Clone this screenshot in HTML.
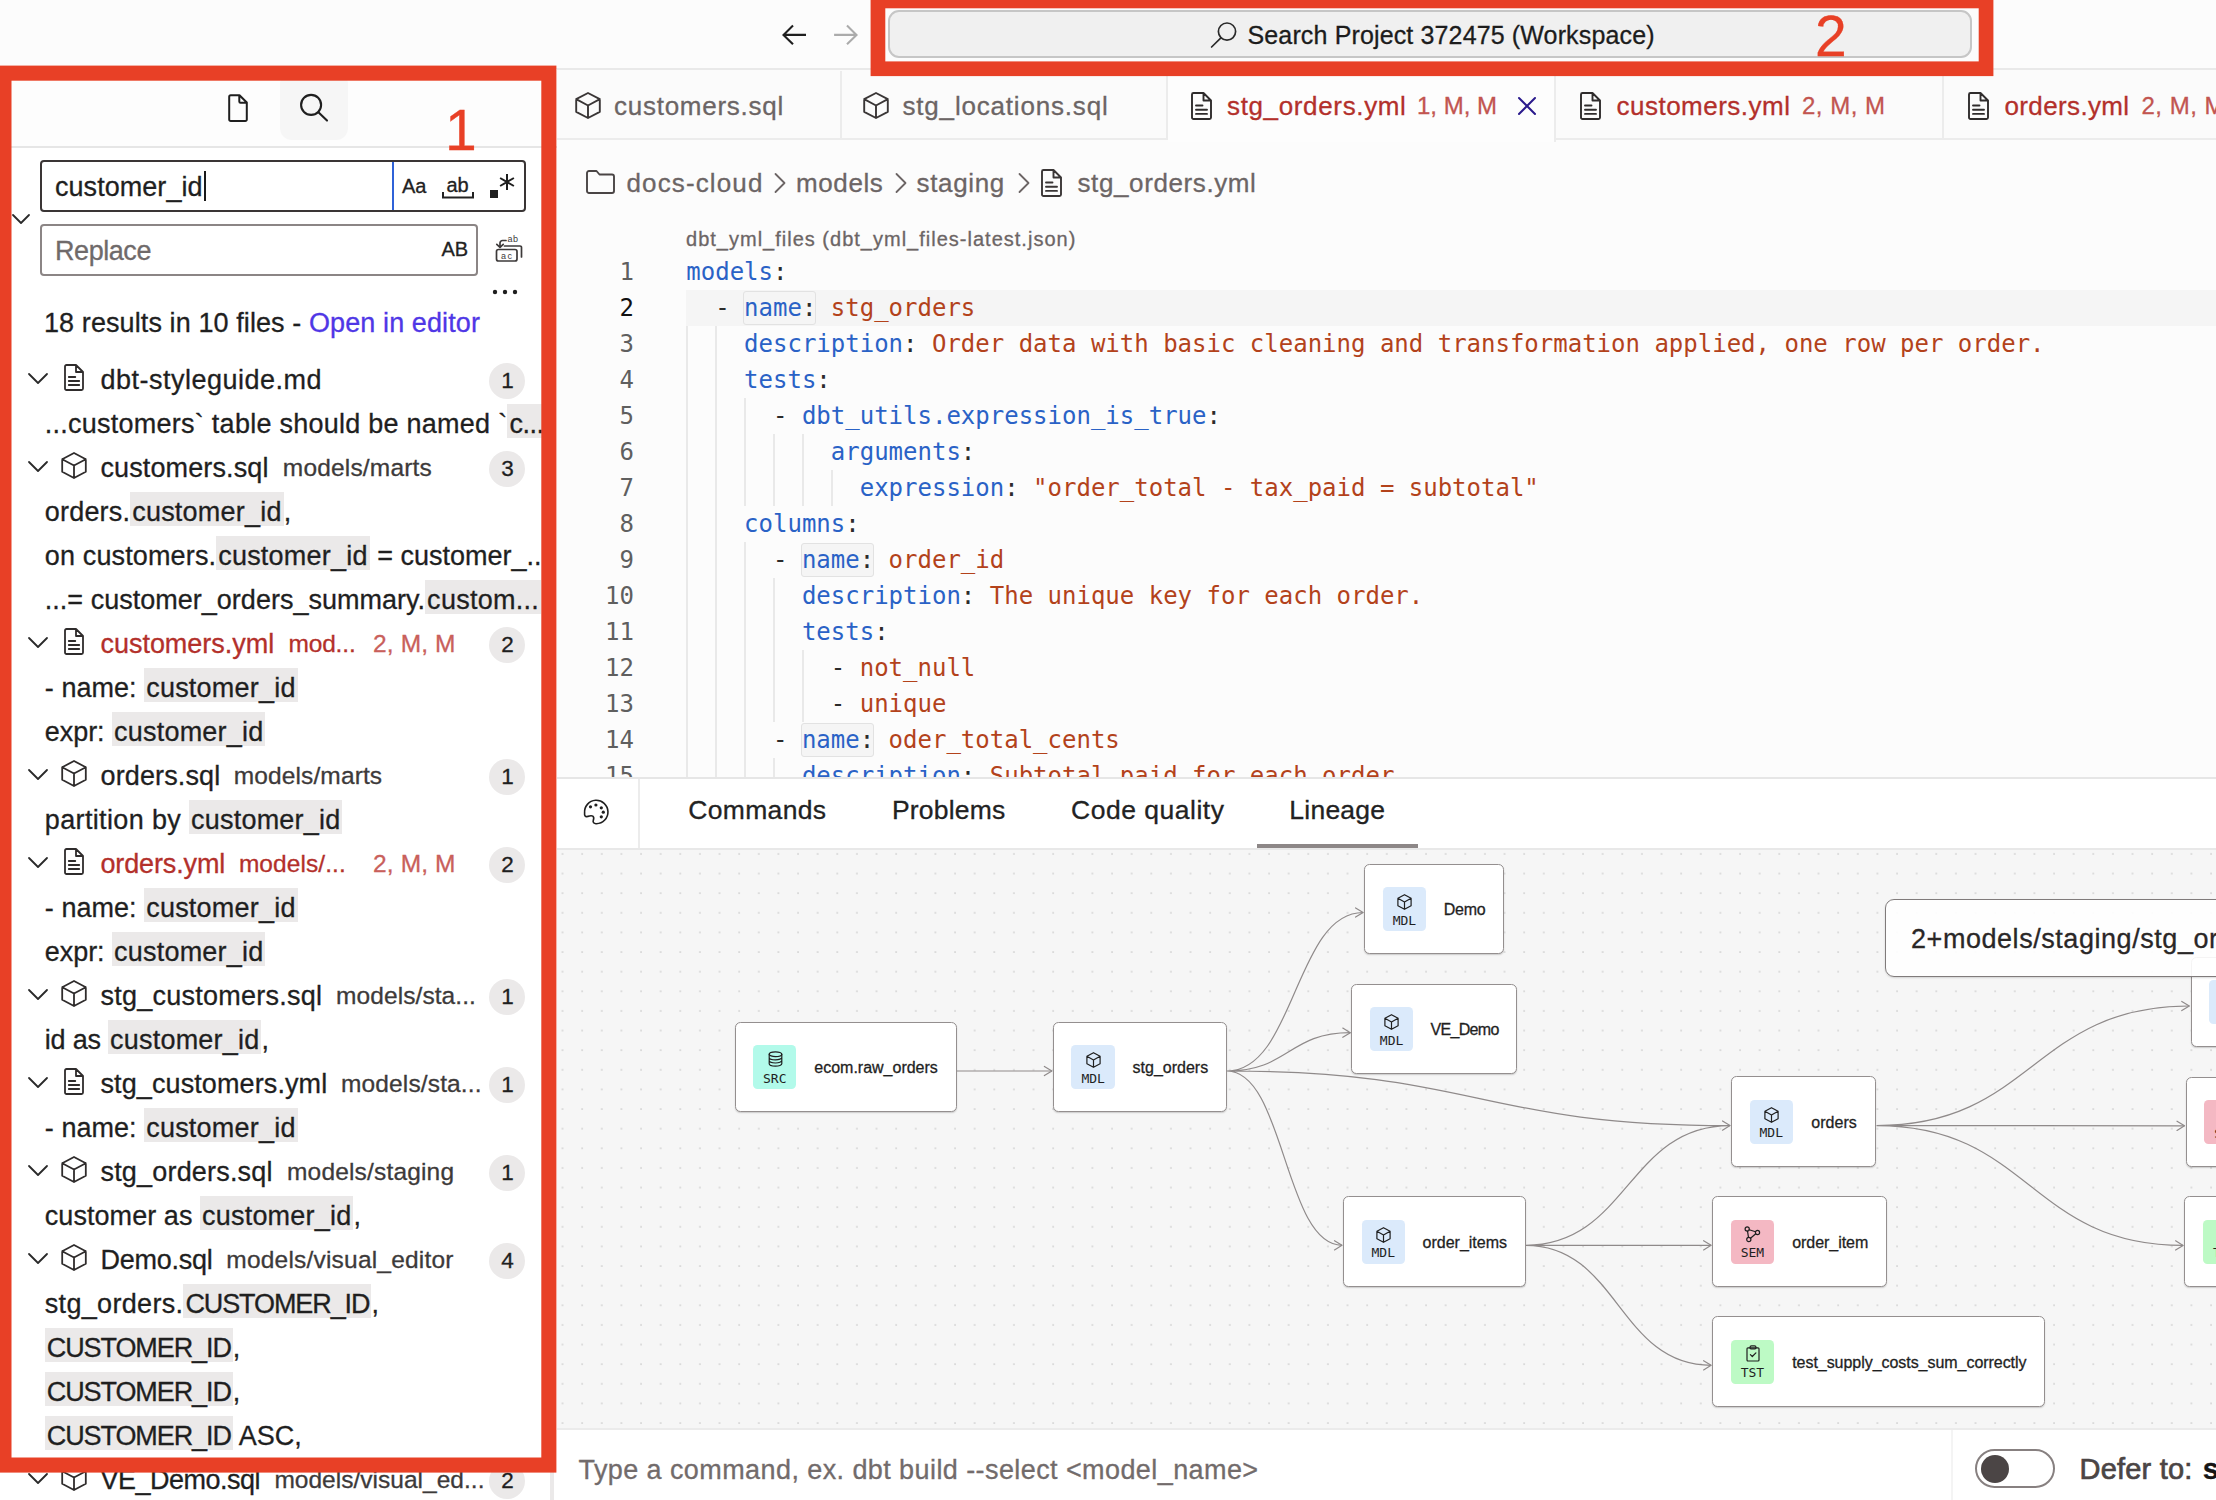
<!DOCTYPE html>
<html lang="en">
<head>
<meta charset="utf-8">
<title>Search Project 372475 (Workspace)</title>
<style>
*{box-sizing:border-box;margin:0;padding:0}
html,body{width:2216px;height:1500px;overflow:hidden;background:#fcfcfc}
body{font-family:"Liberation Sans",sans-serif;color:#1f1f1f;position:relative;-webkit-text-stroke:.3px}
.abs{position:absolute}
svg{display:block;overflow:visible}
.ico{position:absolute;fill:none;stroke:#1f1f1f;stroke-width:1.6;stroke-linecap:round;stroke-linejoin:round}

/* top bar */
#topbar{left:0;top:0;width:2216px;height:70px;background:#fcfcfc;border-bottom:2px solid #e9e9e9}
#cmdbox{left:888px;top:10px;width:1084px;height:48px;border:2px solid #c6c6c6;border-radius:11px;background:#f0f0f0}
#cmdtxt{left:1247.5px;top:19.5px;font-size:25px;line-height:30px;color:#1c1c1c;white-space:nowrap;letter-spacing:.14px}

/* sidebar */
#side{left:0;top:69px;width:557px;height:1431px;background:#fff;overflow:hidden}
#sidehead{left:0;top:0;width:557px;height:79px;background:#fdfdfd;border-bottom:2px solid #e6e6e6}
#sbtn{left:280px;top:3px;width:68px;height:68px;border-radius:12px;background:#f6f6f6}
#sinput{left:40px;top:91px;width:486px;height:52px;border:2px solid #3a3535;border-radius:4px;background:#fff}
#sinput .t{left:13px;top:10px;font-size:27px;line-height:30px;white-space:nowrap}
#caret{left:162px;top:9px;width:2px;height:30px;background:#1a1a1a}
#sdiv{left:350px;top:0;width:2px;height:48px;background:#2f62d8}
#rinput{left:40px;top:155px;width:438px;height:52px;border:2px solid #8b8585;border-radius:4px;background:#fff}
#rinput .t{left:13px;top:10px;font-size:27px;line-height:30px;color:#6f6a6a;white-space:nowrap}
.tg{font-size:20px;line-height:24px;color:#222;white-space:nowrap}
#summary{left:44px;top:238px;font-size:27px;line-height:32px;white-space:nowrap;color:#1f1f1f}
#summary a{color:#4f37e6;text-decoration:none}

.row{position:absolute;left:0;width:557px;height:44px;font-size:27px;line-height:44px;white-space:nowrap;color:#1f1f1f}
.row .nm{position:absolute;left:100.5px;top:1.8px}
.row .pth{font-size:24.5px;color:#3d3a3a}
.row.red .nm,.row.red .pth{color:#b3302b}
.row .st{position:absolute;left:373px;top:2px;font-size:24.5px;color:#c9605b}
.row .bd{position:absolute;left:489.4px;top:6.4px;width:36px;height:36px;border-radius:50%;background:#ebe9e9;font-size:22.5px;line-height:36px;text-align:center;color:#1f1f1f}
.row .m{position:absolute;left:44.8px;top:0}
.row .m span{position:relative;top:1.8px}
.row mark{background:#ebe9e9;color:inherit;padding:3px 2px 1px}
.chev{position:absolute;left:27px;top:15px}
.fic{position:absolute;left:61px;top:8px}

/* editor */
#tabs{left:557px;top:70px;width:1659px;height:70px;background:#fbfbfb;border-bottom:2px solid #ececec}
.tab{position:absolute;top:1px;height:69px;border-right:2px solid #ececec;font-size:26px;line-height:68px;color:#6c6565;white-space:nowrap}
.tab.act{background:#fdfdfd;height:71px}
.tab.red{color:#b3302b}
.tab .st{font-size:24px;color:#c25550;margin-left:10px}
#crumbs{left:557px;top:140px;width:1659px;height:80px;font-size:26px;line-height:30px;color:#6c6565;white-space:nowrap}
#crumbs span{position:absolute;top:28px}
#code{-webkit-text-stroke:0;left:557px;top:220px;width:1659px;height:558px;overflow:hidden;font-family:"DejaVu Sans Mono","Liberation Mono",monospace;font-size:24px;line-height:36px;white-space:pre}
#hint{-webkit-text-stroke:.3px;left:129px;top:5px;font-family:"Liberation Sans",sans-serif;font-size:20px;line-height:28px;color:#6c6565}
.ln{position:absolute;left:0;width:77px;text-align:right;color:#5f5f5f}
.cl{position:absolute;left:129px}
.k{color:#2a62c6}.s{color:#b3421b}.p{color:#2b2b2b}
.g{position:absolute;width:2px;background:#e9e9e9}
.bx{position:absolute;border:1.5px solid #e2e2e2;border-radius:3px;background:#f5f5f5;height:32px}

/* bottom panel */
#ptabs{left:557px;top:777px;width:1659px;height:73px;background:#fff;border-top:2px solid #e6e6e6;border-bottom:2px solid #e8e8e8}
#ptabs .pt{position:absolute;top:15px;font-size:26.5px;line-height:32px;color:#222;white-space:nowrap}
#canvas{left:557px;top:850px;width:1659px;height:578px;background-color:#f6f6f6;background-image:radial-gradient(circle at 1px 1px,#b0b0b0 0,#b0b0b0 .4px,rgba(176,176,176,0) .85px);background-size:19.63px 19.63px;background-position:4.5px 2.9px;overflow:hidden}
#cmdbar{left:557px;top:1428px;width:1659px;height:72px;background:#fff;border-top:2px solid #ebebeb;overflow:hidden}
.node{position:absolute;height:90.4px;background:#fff;border:1.2px solid #948f8f;border-radius:5.5px;box-shadow:0 1px 1.5px rgba(0,0,0,.18)}
.node .sq{-webkit-text-stroke:0;position:absolute;left:17.600px;top:22.400px;width:43.400px;height:44px;border-radius:4.500px;font-family:"DejaVu Sans Mono","Liberation Mono",monospace;font-size:13px;line-height:14px;text-align:center;color:#1f1f1f;padding-top:26.300px}
.node .lb{position:absolute;top:35.300px;font-size:16px;line-height:20px;color:#1f1f1f;white-space:nowrap}
.mdl{background:#dbeafb}.src{background:#b2faea}.sem{background:#f4b8c3}.tst{background:#bdfac5}

/* annotations */
.anno{position:absolute;border:15px solid #e84026;pointer-events:none}
.num{position:absolute;font-size:57px;line-height:57px;color:#e84026}
</style>
</head>
<body>

<!-- TOP BAR -->
<div id="topbar" class="abs">
  <svg class="ico" style="left:780px;top:22px;stroke-width:2.1;stroke-linecap:butt;stroke-linejoin:miter" width="28" height="26" viewBox="0 0 28 26"><path d="M26 12.900H3.600M13 3.400L3.500 12.900l9.500 9.300"/></svg>
  <svg class="ico" style="left:832px;top:22px;stroke:#ababab;stroke-width:2.1;stroke-linecap:butt;stroke-linejoin:miter" width="28" height="26" viewBox="0 0 28 26"><path d="M2.100 12.900h22.400M15 3.400l9.500 9.500-9.500 9.300"/></svg>
  <div id="cmdbox" class="abs"></div>
  <svg class="ico" style="left:1209px;top:20px;stroke-width:1.7;stroke:#2a2a2a" width="30" height="30" viewBox="0 0 30 30"><circle cx="18" cy="11.6" r="8.6"/><path d="M11.9 17.8L2.6 27"/></svg>
  <div id="cmdtxt" class="abs">Search Project 372475 (Workspace)</div>
</div>

<!-- SIDEBAR -->
<div id="side" class="abs">
  <div id="sidehead" class="abs">
    <div id="sbtn" class="abs"></div>
    <svg class="ico" style="left:227px;top:24px;stroke-width:2" width="22" height="30" viewBox="0 0 22 30"><path d="M3.700 2.200h8.800l7.300 7.300v17a1.500 1.500 0 0 1-1.500 1.500h-14.600a1.500 1.500 0 0 1-1.500-1.500v-22.800a1.500 1.500 0 0 1 1.500-1.500zM12.300 2.400v6.100a1.200 1.200 0 0 0 1.200 1.200h6.100"/></svg>
    <svg class="ico" style="left:298px;top:24px;stroke-width:2.1" width="32" height="30" viewBox="0 0 32 30"><circle cx="13.100" cy="11.900" r="10"/><path d="M20.400 19.200l8.600 8.400"/></svg>
  </div>
  <div id="sinput" class="abs"><span class="t abs" style="letter-spacing:0.047px">customer_id</span><div id="caret" class="abs"></div><div id="sdiv" class="abs"></div><span class="tg abs" style="left:360px;top:12px">Aa</span><span class="tg abs" style="left:404.500px;top:10.500px">ab</span><svg class="ico" style="left:399px;top:29px;stroke:#222;stroke-width:2;stroke-linecap:butt;stroke-linejoin:miter" width="34" height="8" viewBox="0 0 34 8"><path d="M2 1v5.500h30v-5.500"/></svg><div class="abs" style="left:448px;top:28px;width:8px;height:8px;background:#1f1f1f"></div><svg class="ico" style="left:456px;top:11px;stroke:#1f1f1f;stroke-width:2;stroke-linecap:butt" width="18" height="18" viewBox="0 0 18 18"><path d="M9 1v16M2.100 5l13.800 8M15.900 5L2.100 13"/></svg></div>
  <svg class="ico" style="left:12px;top:145px;stroke:#2a2a2a;stroke-width:1.8" width="18" height="10" viewBox="0 0 18 10"><path d="M1 1l8 8 8-8"/></svg>
  <div id="rinput" class="abs"><span class="t abs" style="letter-spacing:-0.438px">Replace</span><span class="tg abs" style="left:399.500px;top:10.500px">AB</span></div>
  <svg class="ico" style="left:495px;top:165px;stroke:#3d3a3a;stroke-width:1.700" width="28" height="29" viewBox="0 0 28 29"><path d="M11 6.500h-3.500a2.500 2.500 0 0 0-2.500 2.500v4M1.800 10.300l3.200 3 3.200-3M9.500 12h15.500a1.500 1.500 0 0 1 1.500 1.500v9.500"/><rect x="1.500" y="15.500" width="20.500" height="11.500" rx="2"/><text x="12.500" y="7.800" style="font:9px 'Liberation Sans',sans-serif;stroke:none;fill:#3d3a3a;letter-spacing:.5px">ab</text><text x="6" y="24.800" style="font:9px 'Liberation Sans',sans-serif;stroke:none;fill:#3d3a3a;letter-spacing:1.500px">ac</text></svg>
  <svg class="abs" style="left:492px;top:220px" width="28" height="6" viewBox="0 0 28 6"><circle cx="3" cy="3" r="2.200" fill="#1f1f1f"/><circle cx="13" cy="3" r="2.200" fill="#1f1f1f"/><circle cx="23" cy="3" r="2.200" fill="#1f1f1f"/></svg>
  <div id="summary" class="abs"><span style="letter-spacing:0.095px">18 results in 10 files - </span><a><span style="letter-spacing:0.099px">Open in editor</span></a></div>
  <div class="row" style="top:287.4px"><svg class="ico" style="left:28px;top:16.5px;stroke:#2a2a2a;stroke-width:1.8" width="20" height="11" viewBox="0 0 20 11"><path d="M1 1l9 9 9-9"/></svg><svg class="ico" style="left:64px;top:7.500px;stroke:#2f2c2c;stroke-width:1.8" width="20" height="27" viewBox="0 0 20 27"><path d="M2.500 1h9.500l7 7v16.500a1.500 1.500 0 0 1-1.500 1.500h-15a1.500 1.500 0 0 1-1.500-1.500v-22a1.500 1.500 0 0 1 1.500-1.500zM12 1v7h7M4.800 13h6.500M4.800 17h10.400M4.800 21h10.400"/></svg><span class="nm" style="letter-spacing:0.493px">dbt-styleguide.md</span><span class="bd">1</span></div>
  <div class="row" style="top:331.4px"><span class="m"><span style="letter-spacing:0.253px">...customers` table should be named `</span><mark><span style="letter-spacing:-0.504px">c...</span></mark></span></div>
  <div class="row" style="top:375.4px"><svg class="ico" style="left:28px;top:16.5px;stroke:#2a2a2a;stroke-width:1.8" width="20" height="11" viewBox="0 0 20 11"><path d="M1 1l9 9 9-9"/></svg><svg class="ico" style="left:61px;top:8px;stroke:#2f2c2c;stroke-width:1.8" width="26" height="27" viewBox="0 0 26 27"><path d="M13 1l11.800 6.200v12.600l-11.800 6.200-11.800-6.200v-12.600zM1.200 7.200l11.800 6.300 11.800-6.300M13 13.500v12.500"/></svg><span class="nm" style="letter-spacing:0.111px">customers.sql</span><span class="pth" style="position:absolute;left:282.8px;top:2px;margin:0;letter-spacing:0.179px">models/marts</span><span class="bd">3</span></div>
  <div class="row" style="top:419.4px"><span class="m"><span style="letter-spacing:0.193px">orders.</span><mark><span style="letter-spacing:0.220px">customer_id</span></mark><span>,</span></span></div>
  <div class="row" style="top:463.4px"><span class="m"><span style="letter-spacing:0.140px">on customers.</span><mark><span style="letter-spacing:0.220px">customer_id</span></mark><span> = customer_...</span></span></div>
  <div class="row" style="top:507.4px"><span class="m"><span style="letter-spacing:0.015px">...= customer_orders_summary.</span><mark><span style="letter-spacing:0.274px">custom...</span></mark></span></div>
  <div class="row red" style="top:551.4px"><svg class="ico" style="left:28px;top:16.5px;stroke:#2a2a2a;stroke-width:1.8" width="20" height="11" viewBox="0 0 20 11"><path d="M1 1l9 9 9-9"/></svg><svg class="ico" style="left:64px;top:7.500px;stroke:#2f2c2c;stroke-width:1.8" width="20" height="27" viewBox="0 0 20 27"><path d="M2.500 1h9.500l7 7v16.500a1.500 1.500 0 0 1-1.500 1.500h-15a1.500 1.500 0 0 1-1.500-1.500v-22a1.500 1.500 0 0 1 1.500-1.500zM12 1v7h7M4.800 13h6.500M4.800 17h10.400M4.800 21h10.400"/></svg><span class="nm" style="letter-spacing:-0.033px">customers.yml</span><span class="pth" style="position:absolute;left:288.4px;top:2px;margin:0;letter-spacing:-0.149px">mod...</span><span class="st" style="letter-spacing:0.133px">2, M, M</span><span class="bd">2</span></div>
  <div class="row" style="top:595.4px"><span class="m"><span style="letter-spacing:0.044px">- name: </span><mark><span style="letter-spacing:0.220px">customer_id</span></mark></span></div>
  <div class="row" style="top:639.4px"><span class="m"><span style="letter-spacing:-0.055px">expr: </span><mark><span style="letter-spacing:0.220px">customer_id</span></mark></span></div>
  <div class="row" style="top:683.4px"><svg class="ico" style="left:28px;top:16.5px;stroke:#2a2a2a;stroke-width:1.8" width="20" height="11" viewBox="0 0 20 11"><path d="M1 1l9 9 9-9"/></svg><svg class="ico" style="left:61px;top:8px;stroke:#2f2c2c;stroke-width:1.8" width="26" height="27" viewBox="0 0 26 27"><path d="M13 1l11.800 6.200v12.600l-11.800 6.200-11.800-6.200v-12.600zM1.200 7.200l11.800 6.300 11.800-6.300M13 13.500v12.500"/></svg><span class="nm" style="letter-spacing:0.135px">orders.sql</span><span class="pth" style="position:absolute;left:233.8px;top:2px;margin:0;letter-spacing:0.113px">models/marts</span><span class="bd">1</span></div>
  <div class="row" style="top:727.4px"><span class="m"><span style="letter-spacing:0.356px">partition by </span><mark><span style="letter-spacing:0.220px">customer_id</span></mark></span></div>
  <div class="row red" style="top:771.4px"><svg class="ico" style="left:28px;top:16.5px;stroke:#2a2a2a;stroke-width:1.8" width="20" height="11" viewBox="0 0 20 11"><path d="M1 1l9 9 9-9"/></svg><svg class="ico" style="left:64px;top:7.500px;stroke:#2f2c2c;stroke-width:1.8" width="20" height="27" viewBox="0 0 20 27"><path d="M2.500 1h9.500l7 7v16.500a1.500 1.500 0 0 1-1.500 1.500h-15a1.500 1.500 0 0 1-1.500-1.500v-22a1.500 1.500 0 0 1 1.500-1.500zM12 1v7h7M4.800 13h6.500M4.800 17h10.400M4.800 21h10.400"/></svg><span class="nm" style="letter-spacing:-0.143px">orders.yml</span><span class="pth" style="position:absolute;left:238.9px;top:2px;margin:0;letter-spacing:0.068px">models/...</span><span class="st" style="letter-spacing:0.133px">2, M, M</span><span class="bd">2</span></div>
  <div class="row" style="top:815.4px"><span class="m"><span style="letter-spacing:0.044px">- name: </span><mark><span style="letter-spacing:0.220px">customer_id</span></mark></span></div>
  <div class="row" style="top:859.4px"><span class="m"><span style="letter-spacing:-0.055px">expr: </span><mark><span style="letter-spacing:0.220px">customer_id</span></mark></span></div>
  <div class="row" style="top:903.4px"><svg class="ico" style="left:28px;top:16.5px;stroke:#2a2a2a;stroke-width:1.8" width="20" height="11" viewBox="0 0 20 11"><path d="M1 1l9 9 9-9"/></svg><svg class="ico" style="left:61px;top:8px;stroke:#2f2c2c;stroke-width:1.8" width="26" height="27" viewBox="0 0 26 27"><path d="M13 1l11.800 6.200v12.600l-11.800 6.200-11.800-6.200v-12.600zM1.200 7.200l11.800 6.300 11.800-6.300M13 13.500v12.500"/></svg><span class="nm" style="letter-spacing:0.247px">stg_customers.sql</span><span class="pth" style="position:absolute;left:336px;top:2px;margin:0;letter-spacing:0.085px">models/sta...</span><span class="bd">1</span></div>
  <div class="row" style="top:947.4px"><span class="m"><span style="letter-spacing:-0.224px">id as </span><mark><span style="letter-spacing:0.220px">customer_id</span></mark><span>,</span></span></div>
  <div class="row" style="top:991.4px"><svg class="ico" style="left:28px;top:16.5px;stroke:#2a2a2a;stroke-width:1.8" width="20" height="11" viewBox="0 0 20 11"><path d="M1 1l9 9 9-9"/></svg><svg class="ico" style="left:64px;top:7.500px;stroke:#2f2c2c;stroke-width:1.8" width="20" height="27" viewBox="0 0 20 27"><path d="M2.500 1h9.500l7 7v16.500a1.500 1.500 0 0 1-1.500 1.500h-15a1.500 1.500 0 0 1-1.500-1.500v-22a1.500 1.500 0 0 1 1.500-1.500zM12 1v7h7M4.800 13h6.500M4.800 17h10.400M4.800 21h10.400"/></svg><span class="nm" style="letter-spacing:0.102px">stg_customers.yml</span><span class="pth" style="position:absolute;left:341px;top:2px;margin:0;letter-spacing:0.139px">models/sta...</span><span class="bd">1</span></div>
  <div class="row" style="top:1035.4px"><span class="m"><span style="letter-spacing:0.044px">- name: </span><mark><span style="letter-spacing:0.220px">customer_id</span></mark></span></div>
  <div class="row" style="top:1079.4px"><svg class="ico" style="left:28px;top:16.5px;stroke:#2a2a2a;stroke-width:1.8" width="20" height="11" viewBox="0 0 20 11"><path d="M1 1l9 9 9-9"/></svg><svg class="ico" style="left:61px;top:8px;stroke:#2f2c2c;stroke-width:1.8" width="26" height="27" viewBox="0 0 26 27"><path d="M13 1l11.800 6.200v12.600l-11.800 6.200-11.800-6.200v-12.600zM1.200 7.200l11.800 6.300 11.800-6.300M13 13.500v12.500"/></svg><span class="nm" style="letter-spacing:0.186px">stg_orders.sql</span><span class="pth" style="position:absolute;left:287px;top:2px;margin:0;letter-spacing:0.172px">models/staging</span><span class="bd">1</span></div>
  <div class="row" style="top:1123.4px"><span class="m"><span style="letter-spacing:0.053px">customer as </span><mark><span style="letter-spacing:0.220px">customer_id</span></mark><span>,</span></span></div>
  <div class="row" style="top:1167.4px"><svg class="ico" style="left:28px;top:16.5px;stroke:#2a2a2a;stroke-width:1.8" width="20" height="11" viewBox="0 0 20 11"><path d="M1 1l9 9 9-9"/></svg><svg class="ico" style="left:61px;top:8px;stroke:#2f2c2c;stroke-width:1.8" width="26" height="27" viewBox="0 0 26 27"><path d="M13 1l11.800 6.200v12.600l-11.800 6.200-11.800-6.200v-12.600zM1.200 7.200l11.800 6.300 11.800-6.300M13 13.500v12.500"/></svg><span class="nm" style="letter-spacing:-0.256px">Demo.sql</span><span class="pth" style="position:absolute;left:226.3px;top:2px;margin:0;letter-spacing:0.203px">models/visual_editor</span><span class="bd">4</span></div>
  <div class="row" style="top:1211.4px"><span class="m"><span style="letter-spacing:0.320px">stg_orders.</span><mark><span style="letter-spacing:-1.094px">CUSTOMER_ID</span></mark><span>,</span></span></div>
  <div class="row" style="top:1255.4px"><span class="m"><mark><span style="letter-spacing:-1.094px">CUSTOMER_ID</span></mark><span>,</span></span></div>
  <div class="row" style="top:1299.4px"><span class="m"><mark><span style="letter-spacing:-1.094px">CUSTOMER_ID</span></mark><span>,</span></span></div>
  <div class="row" style="top:1343.4px"><span class="m"><mark><span style="letter-spacing:-1.094px">CUSTOMER_ID</span></mark><span> ASC,</span></span></div>
  <div class="row" style="top:1387.4px"><svg class="ico" style="left:28px;top:16.5px;stroke:#2a2a2a;stroke-width:1.8" width="20" height="11" viewBox="0 0 20 11"><path d="M1 1l9 9 9-9"/></svg><svg class="ico" style="left:61px;top:8px;stroke:#2f2c2c;stroke-width:1.8" width="26" height="27" viewBox="0 0 26 27"><path d="M13 1l11.800 6.200v12.600l-11.800 6.200-11.800-6.200v-12.600zM1.200 7.200l11.800 6.300 11.800-6.300M13 13.500v12.500"/></svg><span class="nm" style="letter-spacing:-0.498px">VE_Demo.sql</span><span class="pth" style="position:absolute;left:274.4px;top:2px;margin:0;letter-spacing:0.019px">models/visual_ed...</span><span class="bd">2</span></div>
</div>

<!-- EDITOR -->
<div id="tabs" class="abs"><div class="tab" style="left:0px;width:285px"><svg class="ico" style="left:18px;top:21px;stroke:#3a3636;stroke-width:1.900" width="26" height="27" viewBox="0 0 26 27"><path d="M13 1l11.800 6.200v12.600l-11.800 6.200-11.800-6.200v-12.600zM1.200 7.200l11.800 6.300 11.800-6.300M13 13.500v12.500"/></svg><span style="position:absolute;left:57px;top:1px;letter-spacing:0.739px">customers.sql</span></div>
  <div class="tab" style="left:285px;width:325.5px"><svg class="ico" style="left:20.5px;top:21px;stroke:#3a3636;stroke-width:1.900" width="26" height="27" viewBox="0 0 26 27"><path d="M13 1l11.800 6.200v12.600l-11.800 6.200-11.800-6.200v-12.600zM1.200 7.200l11.800 6.300 11.800-6.300M13 13.500v12.500"/></svg><span style="position:absolute;left:60.5px;top:1px;letter-spacing:0.810px">stg_locations.sql</span></div>
  <div class="tab red act" style="left:610.5px;width:388.0px"><svg class="ico" style="left:23.0px;top:21px;stroke:#2f2c2c;stroke-width:1.900" width="21" height="28" viewBox="0 0 21 28"><path d="M2.500 1h10l7.500 7.500v17a1.500 1.500 0 0 1-1.500 1.500h-16a1.500 1.500 0 0 1-1.500-1.500v-23a1.500 1.500 0 0 1 1.500-1.500zM12.500 1v7.500h7.500M5 13.500h6.500M5 17.700h11M5 21.900h11"/></svg><span style="position:absolute;left:59.5px;top:1px;letter-spacing:0.643px">stg_orders.yml</span><span class="st" style="position:absolute;left:249.5px;top:1px;margin:0;letter-spacing:-0.002px">1, M, M</span><svg class="ico" style="left:350.0px;top:26px;stroke:#2a1a8c;stroke-width:2" width="18" height="18" viewBox="0 0 18 18"><path d="M1 1l16 16M17 1L1 17"/></svg></div>
  <div class="tab red" style="left:998.5px;width:388.5px"><svg class="ico" style="left:24.0px;top:21px;stroke:#2f2c2c;stroke-width:1.900" width="21" height="28" viewBox="0 0 21 28"><path d="M2.500 1h10l7.500 7.500v17a1.500 1.500 0 0 1-1.500 1.500h-16a1.500 1.500 0 0 1-1.500-1.500v-23a1.500 1.500 0 0 1 1.500-1.500zM12.500 1v7.500h7.500M5 13.500h6.500M5 17.700h11M5 21.900h11"/></svg><span style="position:absolute;left:61.0px;top:1px;letter-spacing:0.494px">customers.yml</span><span class="st" style="position:absolute;left:246.5px;top:1px;margin:0;letter-spacing:0.498px">2, M, M</span></div>
  <div class="tab red" style="left:1387px;width:388px"><svg class="ico" style="left:24px;top:21px;stroke:#2f2c2c;stroke-width:1.900" width="21" height="28" viewBox="0 0 21 28"><path d="M2.500 1h10l7.500 7.500v17a1.500 1.500 0 0 1-1.500 1.500h-16a1.500 1.500 0 0 1-1.500-1.500v-23a1.500 1.500 0 0 1 1.500-1.500zM12.500 1v7.500h7.500M5 13.500h6.500M5 17.700h11M5 21.900h11"/></svg><span style="position:absolute;left:60.5px;top:1px;letter-spacing:0.364px">orders.yml</span><span class="st" style="position:absolute;left:197.5px;top:1px;margin:0;letter-spacing:0.498px">2, M, M</span></div></div>
<div id="crumbs" class="abs"><svg class="ico" style="left:29px;top:30px;stroke:#4a4545;stroke-width:1.900" width="29" height="24" viewBox="0 0 29 24"><path d="M1 3a2 2 0 0 1 2-2h7.500l3 3.500h12.500a2 2 0 0 1 2 2v14.500a2 2 0 0 1-2 2h-23a2 2 0 0 1-2-2z"/></svg>
  <span style="left:69.5px;letter-spacing:1.127px">docs-cloud</span>
  <svg class="ico" style="left:217px;top:33px;stroke:#6c6565;stroke-width:1.800" width="12" height="20" viewBox="0 0 12 20"><path d="M1.500 1l9 9-9 9"/></svg>
  <span style="left:239px;letter-spacing:0.612px">models</span>
  <svg class="ico" style="left:338px;top:33px;stroke:#6c6565;stroke-width:1.800" width="12" height="20" viewBox="0 0 12 20"><path d="M1.500 1l9 9-9 9"/></svg>
  <span style="left:359.5px;letter-spacing:0.665px">staging</span>
  <svg class="ico" style="left:460.5px;top:33px;stroke:#6c6565;stroke-width:1.800" width="12" height="20" viewBox="0 0 12 20"><path d="M1.500 1l9 9-9 9"/></svg>
  <svg class="ico" style="left:484px;top:29px;stroke:#3a3636;stroke-width:1.900" width="21" height="28" viewBox="0 0 21 28"><path d="M2.500 1h10l7.500 7.500v17a1.500 1.500 0 0 1-1.500 1.500h-16a1.500 1.500 0 0 1-1.500-1.500v-23a1.500 1.500 0 0 1 1.500-1.500zM12.500 1v7.500h7.500M5 13.500h6.500M5 17.700h11M5 21.900h11"/></svg>
  <span style="left:520.5px;letter-spacing:0.607px">stg_orders.yml</span></div>
<div id="code" class="abs"><div id="hint" class="abs"><span style="letter-spacing:1.007px">dbt_yml_files (dbt_yml_files-latest.json)</span></div>
  <div class="abs" style="left:129.3px;top:69.7px;width:1600px;height:36px;background:#f5f5f5"></div>
  <div class="bx" style="left:186.1px;top:70.7px;width:73.2px;height:34.500px"></div>
  <div class="bx" style="left:243.9px;top:322.7px;width:73.2px;height:34.500px"></div>
  <div class="bx" style="left:243.9px;top:502.7px;width:73.2px;height:34.500px"></div>
  <div class="g" style="left:129.3px;top:105.7px;height:36px"></div>
  <div class="g" style="left:158.2px;top:105.7px;height:36px"></div>
  <div class="g" style="left:129.3px;top:141.7px;height:36px"></div>
  <div class="g" style="left:158.2px;top:141.7px;height:36px"></div>
  <div class="g" style="left:129.3px;top:177.7px;height:36px"></div>
  <div class="g" style="left:158.2px;top:177.7px;height:36px"></div>
  <div class="g" style="left:187.1px;top:177.7px;height:36px"></div>
  <div class="g" style="left:129.3px;top:213.7px;height:36px"></div>
  <div class="g" style="left:158.2px;top:213.7px;height:36px"></div>
  <div class="g" style="left:187.1px;top:213.7px;height:36px"></div>
  <div class="g" style="left:216.0px;top:213.7px;height:36px"></div>
  <div class="g" style="left:244.9px;top:213.7px;height:36px"></div>
  <div class="g" style="left:129.3px;top:249.7px;height:36px"></div>
  <div class="g" style="left:158.2px;top:249.7px;height:36px"></div>
  <div class="g" style="left:187.1px;top:249.7px;height:36px"></div>
  <div class="g" style="left:216.0px;top:249.7px;height:36px"></div>
  <div class="g" style="left:244.9px;top:249.7px;height:36px"></div>
  <div class="g" style="left:273.8px;top:249.7px;height:36px"></div>
  <div class="g" style="left:129.3px;top:285.7px;height:36px"></div>
  <div class="g" style="left:158.2px;top:285.7px;height:36px"></div>
  <div class="g" style="left:129.3px;top:321.7px;height:36px"></div>
  <div class="g" style="left:158.2px;top:321.7px;height:36px"></div>
  <div class="g" style="left:187.1px;top:321.7px;height:36px"></div>
  <div class="g" style="left:129.3px;top:357.7px;height:36px"></div>
  <div class="g" style="left:158.2px;top:357.7px;height:36px"></div>
  <div class="g" style="left:187.1px;top:357.7px;height:36px"></div>
  <div class="g" style="left:216.0px;top:357.7px;height:36px"></div>
  <div class="g" style="left:129.3px;top:393.7px;height:36px"></div>
  <div class="g" style="left:158.2px;top:393.7px;height:36px"></div>
  <div class="g" style="left:187.1px;top:393.7px;height:36px"></div>
  <div class="g" style="left:216.0px;top:393.7px;height:36px"></div>
  <div class="g" style="left:129.3px;top:429.7px;height:36px"></div>
  <div class="g" style="left:158.2px;top:429.7px;height:36px"></div>
  <div class="g" style="left:187.1px;top:429.7px;height:36px"></div>
  <div class="g" style="left:216.0px;top:429.7px;height:36px"></div>
  <div class="g" style="left:244.9px;top:429.7px;height:36px"></div>
  <div class="g" style="left:129.3px;top:465.7px;height:36px"></div>
  <div class="g" style="left:158.2px;top:465.7px;height:36px"></div>
  <div class="g" style="left:187.1px;top:465.7px;height:36px"></div>
  <div class="g" style="left:216.0px;top:465.7px;height:36px"></div>
  <div class="g" style="left:244.9px;top:465.7px;height:36px"></div>
  <div class="g" style="left:129.3px;top:501.7px;height:36px"></div>
  <div class="g" style="left:158.2px;top:501.7px;height:36px"></div>
  <div class="g" style="left:187.1px;top:501.7px;height:36px"></div>
  <div class="g" style="left:129.3px;top:537.7px;height:36px"></div>
  <div class="g" style="left:158.2px;top:537.7px;height:36px"></div>
  <div class="g" style="left:187.1px;top:537.7px;height:36px"></div>
  <div class="g" style="left:216.0px;top:537.7px;height:36px"></div>
  <div class="ln" style="top:33.7px">1</div>
  <div class="cl" style="left:129.30px;top:33.7px"><span class="k">models</span><span class="p">:</span></div>
  <div class="ln" style="top:69.7px;color:#111">2</div>
  <div class="cl" style="left:158.20px;top:69.7px"><span class="p">- </span><span class="k">name</span><span class="p">: </span><span class="s">stg_orders</span></div>
  <div class="ln" style="top:105.7px">3</div>
  <div class="cl" style="left:187.10px;top:105.7px"><span class="k">description</span><span class="p">: </span><span class="s">Order data with basic cleaning and transformation applied, one row per order.</span></div>
  <div class="ln" style="top:141.7px">4</div>
  <div class="cl" style="left:187.10px;top:141.7px"><span class="k">tests</span><span class="p">:</span></div>
  <div class="ln" style="top:177.7px">5</div>
  <div class="cl" style="left:216.00px;top:177.7px"><span class="p">- </span><span class="k">dbt_utils.expression_is_true</span><span class="p">:</span></div>
  <div class="ln" style="top:213.7px">6</div>
  <div class="cl" style="left:273.80px;top:213.7px"><span class="k">arguments</span><span class="p">:</span></div>
  <div class="ln" style="top:249.7px">7</div>
  <div class="cl" style="left:302.70px;top:249.7px"><span class="k">expression</span><span class="p">: </span><span class="s">"order_total - tax_paid = subtotal"</span></div>
  <div class="ln" style="top:285.7px">8</div>
  <div class="cl" style="left:187.10px;top:285.7px"><span class="k">columns</span><span class="p">:</span></div>
  <div class="ln" style="top:321.7px">9</div>
  <div class="cl" style="left:216.00px;top:321.7px"><span class="p">- </span><span class="k">name</span><span class="p">: </span><span class="s">order_id</span></div>
  <div class="ln" style="top:357.7px">10</div>
  <div class="cl" style="left:244.90px;top:357.7px"><span class="k">description</span><span class="p">: </span><span class="s">The unique key for each order.</span></div>
  <div class="ln" style="top:393.7px">11</div>
  <div class="cl" style="left:244.90px;top:393.7px"><span class="k">tests</span><span class="p">:</span></div>
  <div class="ln" style="top:429.7px">12</div>
  <div class="cl" style="left:273.80px;top:429.7px"><span class="p">- </span><span class="s">not_null</span></div>
  <div class="ln" style="top:465.7px">13</div>
  <div class="cl" style="left:273.80px;top:465.7px"><span class="p">- </span><span class="s">unique</span></div>
  <div class="ln" style="top:501.7px">14</div>
  <div class="cl" style="left:216.00px;top:501.7px"><span class="p">- </span><span class="k">name</span><span class="p">: </span><span class="s">oder_total_cents</span></div>
  <div class="ln" style="top:537.7px">15</div>
  <div class="cl" style="left:244.90px;top:537.7px"><span class="k">description</span><span class="p">: </span><span class="s">Subtotal paid for each order.</span></div></div>

<!-- BOTTOM PANEL -->
<div id="ptabs" class="abs"><svg class="ico" style="left:26px;top:20px;stroke:#1f1f1f;stroke-width:1.600" width="26" height="26" viewBox="0 0 26 26"><path d="M13.400 24.700C10.900 24.900 9.600 23.300 10.300 21.400C11 19.500 11.300 18.300 9.800 17.200C8.300 16.100 6.300 16.900 4.500 17.500C2.300 18.200 1.300 16.500 1.600 14A11.700 11.700 0 1 1 13.400 24.700z"/><circle cx="7.500" cy="7.800" r="1.600" fill="#1f1f1f" stroke="none"/><circle cx="12.900" cy="6" r="1.600" fill="#1f1f1f" stroke="none"/><circle cx="18.300" cy="8.800" r="1.600" fill="#1f1f1f" stroke="none"/><circle cx="20.300" cy="13.200" r="1.600" fill="#1f1f1f" stroke="none"/><circle cx="18.300" cy="17.800" r="1.600" fill="#1f1f1f" stroke="none"/></svg>
  <div class="abs" style="left:81px;top:0;width:2px;height:69px;background:#ececec"></div>
  <span class="pt" style="left:131.2px;letter-spacing:0.337px">Commands</span>
  <span class="pt" style="left:335.0px;letter-spacing:0.183px">Problems</span>
  <span class="pt" style="left:514.0px;letter-spacing:0.514px">Code quality</span>
  <span class="pt" style="left:732.3px;letter-spacing:0.239px">Lineage</span>
  <div class="abs" style="left:700px;top:65px;width:161px;height:4px;background:#8d8787"></div></div>
<div id="canvas" class="abs"><svg class="abs" style="left:0;top:0" width="1659" height="580" viewBox="0 0 1659 580"><path d="M399.7 221.0C447.3 221.0 447.3 221.0 494.9 221.0M670.0 221.0C738.0 221.0 738.0 62.5 806.1 62.5M670.0 221.0C731.7 221.0 731.7 182.7 793.3 182.7M670.0 221.0C921.5 221.0 921.5 275.6 1173.0 275.6M670.0 221.0C727.5 221.0 727.5 395.3 785.0 395.3M968.7 395.3C1070.8 395.3 1070.8 275.6 1173.0 275.6M968.7 395.3C1061.4 395.3 1061.4 395.3 1154.1 395.3M968.7 395.3C1061.4 395.3 1061.4 515.3 1154.1 515.3M1319.5 275.6C1475.9 275.6 1475.9 156.0 1632.3 156.0M1319.5 275.6C1473.5 275.6 1473.5 275.8 1627.5 275.8M1319.5 275.6C1472.8 275.6 1472.8 395.4 1626.1 395.4" fill="none" stroke="#8f8a8a" stroke-width="1.200"/><path d="M487.4 216.4L494.9 221.0L487.4 225.6M798.6 57.9L806.1 62.5L798.6 67.1M785.8 178.1L793.3 182.7L785.8 187.3M1165.5 271.0L1173.0 275.6L1165.5 280.2M777.5 390.7L785.0 395.3L777.5 399.9M1165.5 271.0L1173.0 275.6L1165.5 280.2M1146.6 390.7L1154.1 395.3L1146.6 399.9M1146.6 510.7L1154.1 515.3L1146.6 519.9M1624.8 151.4L1632.3 156.0L1624.8 160.6M1620.0 271.2L1627.5 275.8L1620.0 280.4M1618.6 390.8L1626.1 395.4L1618.6 400.0" fill="none" stroke="#8f8a8a" stroke-width="1.200" stroke-linecap="round" stroke-linejoin="round"/></svg>
  <div class="node" style="left:177.5px;top:171.9px;width:222.0px"><div class="sq src"><svg class="ico" style="left:14.500px;top:6px;stroke:#1f1f1f;stroke-width:1.200" width="15" height="16" viewBox="0 0 15 16"><ellipse cx="7.500" cy="3.200" rx="6.300" ry="2.400"/><path d="M1.200 3.200v9.600c0 1.300 2.800 2.400 6.300 2.400s6.300-1.100 6.300-2.400v-9.600M1.200 6.400c0 1.300 2.800 2.400 6.300 2.400s6.300-1.100 6.300-2.400M1.200 9.600c0 1.300 2.800 2.400 6.300 2.400s6.300-1.100 6.300-2.400"/></svg>SRC</div><span class="lb" style="left:78.8px;letter-spacing:-0.007px">ecom.raw_orders</span></div>
  <div class="node" style="left:495.9px;top:171.9px;width:173.9px"><div class="sq mdl"><svg class="ico" style="left:14.300px;top:6.900px;stroke:#1f1f1f;stroke-width:1.200" width="15" height="16" viewBox="0 0 15 16"><path d="M7.500 .700l6.600 3.600v7.400l-6.600 3.600-6.600-3.600v-7.400zM.900 4.300l6.600 3.700 6.600-3.700M7.500 8v7.300"/></svg>MDL</div><span class="lb" style="left:78.7px;letter-spacing:0.001px">stg_orders</span></div>
  <div class="node" style="left:807.1px;top:13.9px;width:140.3px"><div class="sq mdl"><svg class="ico" style="left:14.300px;top:6.900px;stroke:#1f1f1f;stroke-width:1.200" width="15" height="16" viewBox="0 0 15 16"><path d="M7.500 .700l6.600 3.600v7.400l-6.600 3.600-6.600-3.600v-7.400zM.900 4.300l6.600 3.700 6.600-3.700M7.500 8v7.300"/></svg>MDL</div><span class="lb" style="left:78.7px;letter-spacing:-0.272px">Demo</span></div>
  <div class="node" style="left:794.3px;top:133.9px;width:166.0px"><div class="sq mdl"><svg class="ico" style="left:14.300px;top:6.900px;stroke:#1f1f1f;stroke-width:1.200" width="15" height="16" viewBox="0 0 15 16"><path d="M7.500 .700l6.600 3.600v7.400l-6.600 3.600-6.600-3.600v-7.400zM.900 4.300l6.600 3.700 6.600-3.700M7.500 8v7.300"/></svg>MDL</div><span class="lb" style="left:78.1px;letter-spacing:-0.646px">VE_Demo</span></div>
  <div class="node" style="left:786.0px;top:346.4px;width:182.5px"><div class="sq mdl"><svg class="ico" style="left:14.300px;top:6.900px;stroke:#1f1f1f;stroke-width:1.200" width="15" height="16" viewBox="0 0 15 16"><path d="M7.500 .700l6.600 3.600v7.400l-6.600 3.600-6.600-3.600v-7.400zM.900 4.300l6.600 3.700 6.600-3.700M7.500 8v7.300"/></svg>MDL</div><span class="lb" style="left:78.6px;letter-spacing:-0.008px">order_items</span></div>
  <div class="node" style="left:1174.0px;top:226.4px;width:145.3px"><div class="sq mdl"><svg class="ico" style="left:14.300px;top:6.900px;stroke:#1f1f1f;stroke-width:1.200" width="15" height="16" viewBox="0 0 15 16"><path d="M7.500 .700l6.600 3.600v7.400l-6.600 3.600-6.600-3.600v-7.400zM.900 4.300l6.600 3.700 6.600-3.700M7.500 8v7.300"/></svg>MDL</div><span class="lb" style="left:79.3px;letter-spacing:0.040px">orders</span></div>
  <div class="node" style="left:1155.1px;top:346.4px;width:175.2px"><div class="sq sem"><svg class="ico" style="left:13.500px;top:6px;stroke:#1f1f1f;stroke-width:1.200" width="17" height="16" viewBox="0 0 17 16"><circle cx="3.200" cy="3" r="2.100"/><circle cx="13.500" cy="6.500" r="2.100"/><circle cx="4.800" cy="13.500" r="2.100"/><path d="M5.200 3.700l6.300 2.100M11.800 7.800l-5.300 4.400M3.500 5.100l1 6.300"/></svg>SEM</div><span class="lb" style="left:79.1px;letter-spacing:-0.048px">order_item</span></div>
  <div class="node" style="left:1155.1px;top:466.4px;width:332.7px"><div class="sq tst"><svg class="ico" style="left:15px;top:5.500px;stroke:#1f1f1f;stroke-width:1.200" width="14" height="17" viewBox="0 0 14 17"><rect x="1" y="2.800" width="12" height="13.200" rx="1"/><path d="M4 2.800v-.600c0-.800.700-1.400 1.500-1.400h3c.800 0 1.500.600 1.500 1.400v.600c0 .600-.400 1-1 1h-4c-.600 0-1-.400-1-1zM4.400 9.600l1.900 1.900 3.600-3.600"/></svg>TST</div><span class="lb" style="left:79.1px;letter-spacing:-0.044px">test_supply_costs_sum_correctly</span></div>
  <div class="node" style="left:1633.8px;top:106.9px;width:209.0px"><div class="sq mdl"><svg class="ico" style="left:14.300px;top:6.900px;stroke:#1f1f1f;stroke-width:1.200" width="15" height="16" viewBox="0 0 15 16"><path d="M7.500 .700l6.600 3.600v7.400l-6.600 3.600-6.600-3.600v-7.400zM.900 4.300l6.600 3.700 6.600-3.700M7.500 8v7.300"/></svg>MDL</div><span class="lb" style="left:78.0px;">orders</span></div>
  <div class="node" style="left:1628.8px;top:226.9px;width:214.0px"><div class="sq sem"><svg class="ico" style="left:13.500px;top:6px;stroke:#1f1f1f;stroke-width:1.200" width="17" height="16" viewBox="0 0 17 16"><circle cx="3.200" cy="3" r="2.100"/><circle cx="13.500" cy="6.500" r="2.100"/><circle cx="4.800" cy="13.500" r="2.100"/><path d="M5.200 3.700l6.300 2.100M11.800 7.800l-5.300 4.400M3.500 5.100l1 6.300"/></svg>SEM</div><span class="lb" style="left:78.0px;">orders</span></div>
  <div class="node" style="left:1627.4px;top:346.4px;width:215.4px"><div class="sq tst"><svg class="ico" style="left:15px;top:5.500px;stroke:#1f1f1f;stroke-width:1.200" width="14" height="17" viewBox="0 0 14 17"><rect x="1" y="2.800" width="12" height="13.200" rx="1"/><path d="M4 2.800v-.600c0-.800.700-1.400 1.500-1.400h3c.800 0 1.500.600 1.500 1.400v.600c0 .600-.400 1-1 1h-4c-.600 0-1-.400-1-1zM4.400 9.600l1.900 1.900 3.600-3.600"/></svg>TST</div><span class="lb" style="left:79.4px;">test</span></div>
  <div class="abs" style="left:1328px;top:48.500px;width:400px;height:78.500px;background:rgba(255,255,255,.9);border:1.500px solid #807b7b;border-radius:9px;box-shadow:0 1px 2px rgba(0,0,0,.15)"><span style="position:absolute;left:25px;top:23px;font-size:27px;line-height:32px;white-space:nowrap;color:#2a2727;letter-spacing:.55px;">2+models/staging/stg_orders</span></div></div>
<div id="cmdbar" class="abs"><span style="position:absolute;left:21.500px;top:23.500px;font-size:27px;line-height:32px;white-space:nowrap;color:#726b6b;letter-spacing:0.415px">Type a command, ex. dbt build --select &lt;model_name&gt;</span>
  <div class="abs" style="left:1394px;top:0;width:1.5px;height:72px;background:#f4f4f4"></div>
  <div class="abs" style="left:1418px;top:19px;width:80px;height:39px;border:2px solid #878080;border-radius:20px;background:#fff"><div class="abs" style="left:3.500px;top:3.500px;width:28px;height:28px;border-radius:50%;background:#4b4545"></div></div>
  <div class="abs" style="left:1522.500px;top:21.500px;font-size:29px;line-height:34px;white-space:nowrap;color:#4b4545;letter-spacing:.2px;-webkit-text-stroke:.7px">Defer to: <span style="color:#151515;font-weight:bold;-webkit-text-stroke:.3px;margin-left:2px">staging</span></div></div>

<!-- ANNOTATIONS -->
<div class="abs" style="left:550.3px;top:1470px;width:3.4px;height:30px;background:#ebe9e9"></div>
<svg class="abs" style="left:0;top:0;pointer-events:none" width="2216" height="1500" viewBox="0 0 2216 1500"><rect x="3.95" y="73.15" width="544.9" height="1391.9" fill="none" stroke="#e84026" stroke-width="15.1"/><rect x="877.95" y="0.95" width="1108.1" height="67.8" fill="none" stroke="#e84026" stroke-width="14.7"/></svg>
<div class="num" style="left:445px;top:102px">1</div>
<div class="num" style="left:1815px;top:8px">2</div>

</body>
</html>
